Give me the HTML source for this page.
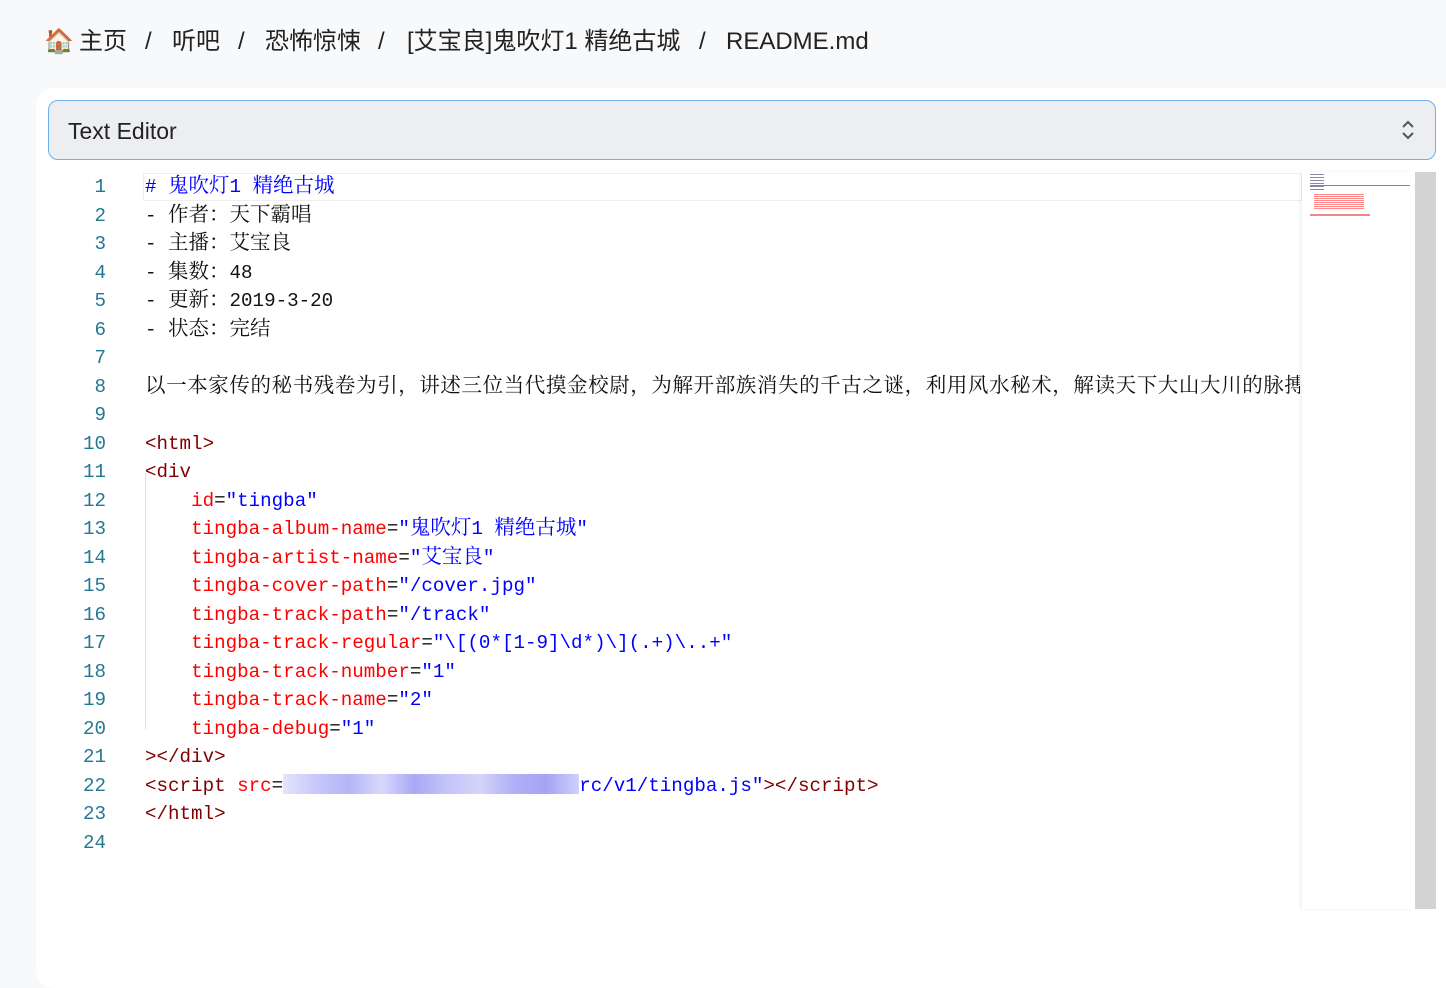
<!DOCTYPE html>
<html><head><meta charset="utf-8"><style>
body{margin:0;background:#f8f9fb;width:1446px;height:909px;overflow:hidden;font-family:"Liberation Sans","Noto Sans CJK SC",sans-serif}
.bc{position:absolute;top:22px;font-size:24px;line-height:40px;height:40px;color:#222;white-space:pre}
.bc span{line-height:0}
.card{position:absolute;left:36px;top:88px;width:1430px;height:900px;background:#fff;border-radius:18px}
.sel{position:absolute;left:48px;top:100px;width:1386px;height:58px;background:#eceef1;border:1px solid #6cb0ec;border-radius:10px}
.sel span{position:absolute;left:19px;top:17px;font-size:23px;color:#222}
.ed{position:absolute;left:36px;top:173px;width:1266px;height:740px;font-family:"Liberation Mono","Noto Serif CJK SC",monospace;font-size:19.2px}
.l{position:absolute;height:28.5px;line-height:28.5px;white-space:pre;width:1155px;overflow:hidden}
.n{position:absolute;width:70px;text-align:right;color:#237893;line-height:28.5px}
.c{font-size:20.5px;font-family:"Noto Serif CJK SC",serif;line-height:0}
.t{color:#800000}.a{color:#f00}.s{color:#00f}.h{color:#0000ff}
.mm{position:absolute;left:1302px;top:172px;width:113px;height:737px;background:#fff;box-shadow:-2px 0 4px rgba(0,0,0,.06)}
.sb{position:absolute;left:1415px;top:172px;width:21px;height:737px;background:#d3d3d3}
.cur{position:absolute;left:143px;top:173px;width:1157px;height:26px;border:1px solid #eee}
</style></head><body>
<div class="bc" style="left:44px"><span>🏠</span></div>
<div class="bc" style="left:79px"><span>主页</span></div>
<div class="bc" style="left:145px">/</div>
<div class="bc" style="left:172px"><span>听吧</span></div>
<div class="bc" style="left:238px">/</div>
<div class="bc" style="left:265px"><span>恐怖惊悚</span></div>
<div class="bc" style="left:378px">/</div>
<div class="bc" style="left:407px"><span>[艾宝良]鬼吹灯1 精绝古城</span></div>
<div class="bc" style="left:699px">/</div>
<div class="bc" style="left:726px">README.md</div>
<div class="card"></div>
<div class="sel"><span>Text Editor</span>
<svg style="position:absolute;right:20px;top:19px" width="14" height="20" viewBox="0 0 14 20"><path d="M2 7l5-5 5 5M2 13l5 5 5-5" fill="none" stroke="#555" stroke-width="2"/></svg></div>
<div class="cur"></div>
<div class="mm">
<div style="position:absolute;left:8px;top:2px;width:14px;height:16px;background:repeating-linear-gradient(#88a 0 1px,transparent 1px 3px)"></div>
<div style="position:absolute;left:8px;top:13px;width:100px;height:1px;background:#888"></div>
<div style="position:absolute;left:12px;top:22px;width:50px;height:16px;background:repeating-linear-gradient(#f88 0 1px,transparent 1px 2px)"></div>
<div style="position:absolute;left:8px;top:42px;width:60px;height:2px;background:#e88"></div>
</div>
<div class="sb"></div>
<div class="ed">
<script>
function c(s){return s.replace(/([\u3000-\u9fff\uff00-\uffef]+)/g,'<span class="c">$1</span>');}
var L=[
'<span class="h"># 鬼吹灯1 精绝古城</span>',
'- 作者：天下霸唱','- 主播：艾宝良','- 集数：48','- 更新：2019-3-20','- 状态：完结','',
'<span style="letter-spacing:0.6px">以一本家传的秘书残卷为引，讲述三位当代摸金校尉，为解开部族消失的千古之谜，利用风水秘术，解读天下大山大川的脉搏，</span>',
'','<span class="t">&lt;html&gt;</span>','<span class="t">&lt;div</span>',
'    <span class="a">id</span>=<span class="s">"tingba"</span>',
'    <span class="a">tingba-album-name</span>=<span class="s">"鬼吹灯1 精绝古城"</span>',
'    <span class="a">tingba-artist-name</span>=<span class="s">"艾宝良"</span>',
'    <span class="a">tingba-cover-path</span>=<span class="s">"/cover.jpg"</span>',
'    <span class="a">tingba-track-path</span>=<span class="s">"/track"</span>',
'    <span class="a">tingba-track-regular</span>=<span class="s">"\\[(0*[1-9]\\d*)\\](.+)\\..+"</span>',
'    <span class="a">tingba-track-number</span>=<span class="s">"1"</span>',
'    <span class="a">tingba-track-name</span>=<span class="s">"2"</span>',
'    <span class="a">tingba-debug</span>=<span class="s">"1"</span>',
'<span class="t">&gt;&lt;/div&gt;</span>',
'<span class="t">&lt;script</span> <span class="a">src</span>=<span style="display:inline-block;width:296px;height:20px;vertical-align:-3px;background:linear-gradient(90deg,#e4e4fc,#c8c8fa,#b4b4f8,#d8d8fc,#a8a8f6,#c4c4f8,#d4d4fa,#b0b0f6,#a4a4f4,#d0d0fa)"></span><span class="s">rc/v1/tingba.js"</span><span class="t">&gt;&lt;/script&gt;</span>',
'<span class="t">&lt;/html&gt;</span>',''];
var h='';for(var i=0;i<L.length;i++){var y=(i*28.52).toFixed(1);h+='<div class="n" style="top:'+y+'px;left:0">'+(i+1)+'</div><div class="l" style="top:'+y+'px;left:109px;color:#111">'+c(L[i])+'</div>';}
document.write(h);
</script>
<div style="position:absolute;left:109px;top:300px;width:1px;height:256px;background:#ddd"></div>
</div>
</body></html>
